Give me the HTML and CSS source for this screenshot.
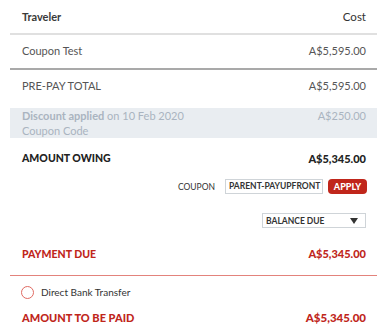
FILE: index.html
```html
<!DOCTYPE html>
<html lang="en">
<head>
    <meta charset="UTF-8">
    <title>Booking summary</title>
    <link rel="stylesheet" href="styles.css">
</head>
<body>
<div class="summary">
    <div class="row head">
        <span>Traveler</span>
        <span class="cost">Cost</span>
    </div>
    <div class="row item">
        <span>Coupon Test</span>
        <span>A$5,595.00</span>
    </div>
    <div class="row total">
        <span>PRE-PAY TOTAL</span>
        <span>A$5,595.00</span>
    </div>
    <div class="discount">
        <div class="lines">
            <div><b>Discount applied</b> on 10 Feb 2020</div>
            <div>Coupon Code</div>
        </div>
        <span>A$250.00</span>
    </div>
    <div class="row owing">
        <span>AMOUNT OWING</span>
        <span>A$5,345.00</span>
    </div>
    <div class="coupon">
        <label>COUPON</label>
        <div class="field">PARENT-PAYUPFRONT</div>
        <button class="apply">APPLY</button>
    </div>
    <div class="choose">
        <div class="select">
            <span>BALANCE DUE</span>
            <span class="arrow"></span>
        </div>
    </div>
    <div class="row due">
        <span>PAYMENT DUE</span>
        <span>A$5,345.00</span>
    </div>
    <div class="method">
        <span class="radio"></span>
        <span>Direct Bank Transfer</span>
    </div>
    <div class="row paid">
        <span>AMOUNT TO BE PAID</span>
        <span>A$5,345.00</span>
    </div>
</div>
</body>
</html>
```

FILE: styles.css
```css
* {
    padding: 0;
    margin: 0;
    box-sizing: border-box;
}

body {
    font-family: Lato, "Open Sans", sans-serif;
    background: #fff;
    color: #333;
}

.summary {
    width: 367px;
    margin-left: 10px;
}

.row {
    display: flex;
    justify-content: space-between;
    align-items: center;
    padding: 0 11px 0 12px;
}

.head {
    height: 35px;
    font-size: 11px;
    font-weight: 700;
    color: #3a3a3a;
    border-bottom: 2px solid #e0e0e0;
}

.head .cost {
    font-weight: 400;
    font-size: 11.5px;
    color: #333;
}

.item {
    height: 35px;
    padding-bottom: 3px;
    font-size: 11px;
    color: #555;
    border-bottom: 2px solid #a9a9a9;
}

.total {
    height: 30px;
    font-size: 11px;
    color: #555;
}

.discount {
    display: flex;
    justify-content: space-between;
    align-items: flex-start;
    margin-top: 8px;
    height: 30px;
    padding: 0 11px 0 12px;
    background: #e9edf1;
    color: #aab4c0;
    font-size: 11px;
    line-height: 15px;
}

.discount b {
    font-weight: 700;
}

.owing {
    height: 40px;
    font-size: 10.5px;
    font-weight: 900;
    color: #222;
}

.owing span:last-child {
    font-size: 11px;
}

.coupon {
    display: flex;
    justify-content: flex-end;
    align-items: center;
    gap: 8px;
    margin-top: 1px;
    padding-right: 10px;
    font-size: 8.5px;
}

.coupon label {
    color: #333;
    margin-right: 2px;
}

.field {
    width: 98px;
    height: 15px;
    border: 1px solid #cfd4d8;
    padding-left: 3px;
    line-height: 13px;
    font-size: 8.5px;
    font-weight: 700;
    color: #333;
}

.apply {
    width: 39px;
    height: 15px;
    margin-left: -3px;
    border: none;
    border-radius: 4px;
    background: #c0261b;
    color: #fff;
    font-family: inherit;
    font-size: 9px;
    font-weight: 900;
}

.choose {
    display: flex;
    justify-content: flex-end;
    margin-top: 19px;
    padding-right: 11px;
}

.select {
    display: flex;
    justify-content: space-between;
    align-items: center;
    width: 104px;
    height: 15px;
    padding: 0 7px 0 3px;
    border: 1px solid #cfd4d8;
    font-size: 8.5px;
    font-weight: 700;
    color: #333;
}

.arrow {
    width: 0;
    height: 0;
    border-left: 4px solid transparent;
    border-right: 4px solid transparent;
    border-top: 6px solid #333;
}

.due {
    height: 48px;
    padding-top: 4px;
    font-size: 10.5px;
    font-weight: 900;
    color: #c0261b;
    border-bottom: 1px solid #e3837c;
}

.due span:last-child {
    font-size: 11px;
}

.method {
    display: flex;
    align-items: center;
    height: 32px;
    padding-left: 11px;
    font-size: 10px;
    color: #333;
}

.radio {
    width: 13px;
    height: 13px;
    margin-right: 7px;
    border: 1.5px solid #e06a62;
    border-radius: 50%;
}

.paid {
    height: 18px;
    font-size: 11px;
    font-weight: 900;
    color: #c0261b;
}

.paid span:last-child {
    font-size: 11.5px;
}
```
